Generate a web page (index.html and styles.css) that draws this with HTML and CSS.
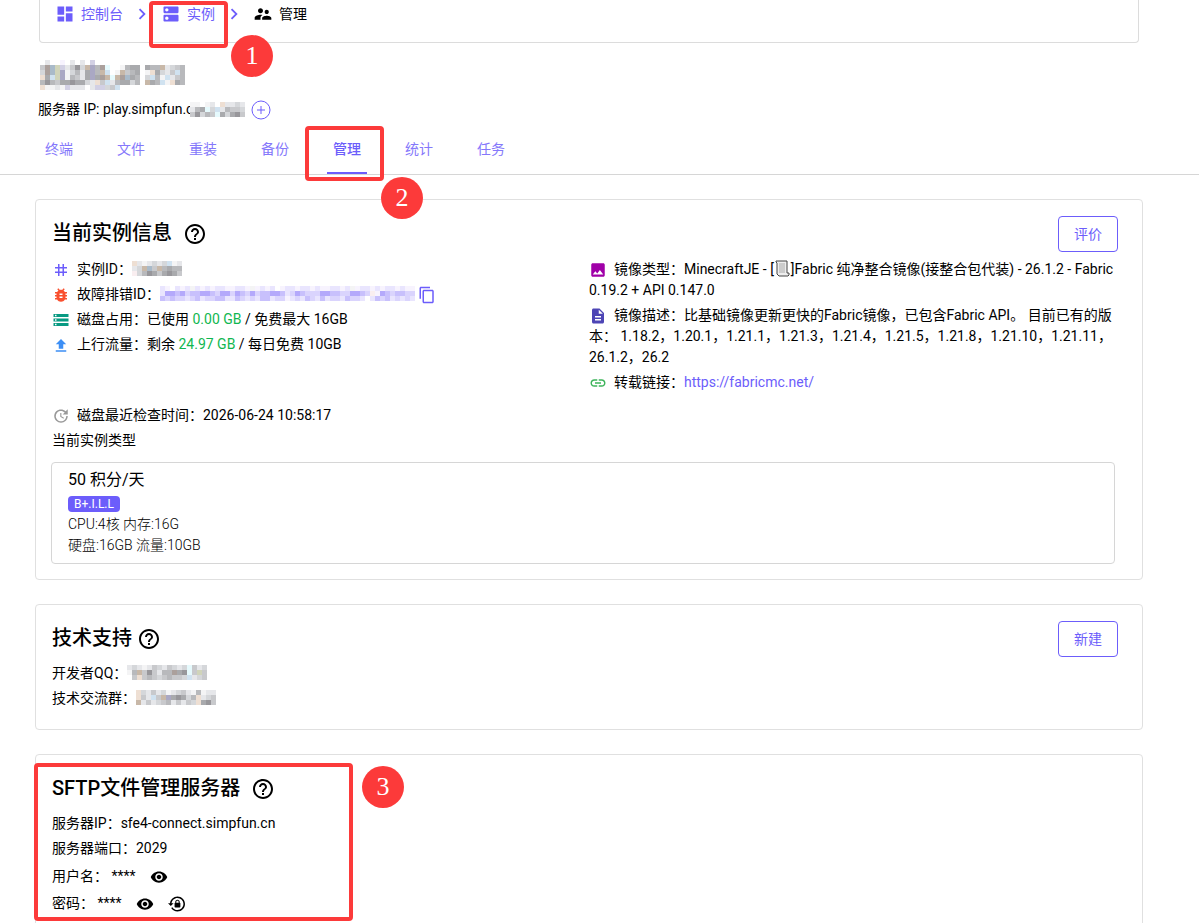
FILE: index.html
```html
<!DOCTYPE html>
<html lang="zh-CN">
  <head>
    <meta charset="UTF-8" />
    <meta name="viewport" content="width=device-width, initial-scale=1.0" />
    <title>实例管理</title>
    <link rel="stylesheet" href="styles.css">
  </head>
  <body>
    <svg class="sprite" aria-hidden="true">
      <symbol id="i-help" viewBox="0 0 24 24"><path d="M11 18h2v-2h-2v2zm1-16C6.48 2 2 6.48 2 12s4.48 10 10 10 10-4.48 10-10S17.52 2 12 2zm0 18c-4.41 0-8-3.59-8-8s3.59-8 8-8 8 3.59 8 8-3.59 8-8 8zm0-14c-2.21 0-4 1.79-4 4h2c0-1.1.9-2 2-2s2 .9 2 2c0 2-3 1.75-3 5h2c0-2.25 3-2.5 3-5 0-2.21-1.79-4-4-4z"/></symbol>
      <symbol id="i-chevron" viewBox="0 0 24 24"><path d="M8.59 16.58 13.17 12 8.59 7.41 10 6l6 6-6 6z"/></symbol>
      <symbol id="i-eye" viewBox="0 0 24 24"><path d="M12 4.5C7 4.5 2.73 7.61 1 12c1.73 4.39 6 7.5 11 7.5s9.27-3.11 11-7.5c-1.73-4.39-6-7.5-11-7.5zM12 17c-2.76 0-5-2.24-5-5s2.24-5 5-5 5 2.24 5 5-2.24 5-5 5zm0-8c-1.66 0-3 1.34-3 3s1.34 3 3 3 3-1.34 3-3-1.34-3-3-3z"/></symbol>
    </svg>

    <div class="page">
      <nav class="breadcrumb">
        <a href="#" class="crumb">
          <svg class="icon-md" viewBox="0 0 24 24"><path d="M3 13h8V3H3v10zm0 8h8v-6H3v6zm10 0h8V11h-8v10zm0-18v6h8V3h-8z"/></svg>
          控制台
        </a>
        <svg class="chevron"><use href="#i-chevron"/></svg>
        <a href="#" class="crumb">
          <svg class="icon-md" viewBox="0 0 24 24"><path d="M20 13H4c-.55 0-1 .45-1 1v6c0 .55.45 1 1 1h16c.55 0 1-.45 1-1v-6c0-.55-.45-1-1-1zM7 19c-1.1 0-2-.9-2-2s.9-2 2-2 2 .9 2 2-.9 2-2 2zM20 3H4c-.55 0-1 .45-1 1v6c0 .55.45 1 1 1h16c.55 0 1-.45 1-1V4c0-.55-.45-1-1-1zM7 9c-1.1 0-2-.9-2-2s.9-2 2-2 2 .9 2 2-.9 2-2 2z"/></svg>
          实例
          <span class="frame frame-crumb"></span>
          <span class="step step-crumb">1</span>
        </a>
        <svg class="chevron"><use href="#i-chevron"/></svg>
        <span class="crumb current">
          <svg class="icon-md" viewBox="0 0 24 24"><path d="M16.5 12c1.38 0 2.49-1.12 2.49-2.5S17.88 7 16.5 7 14 8.12 14 9.5s1.12 2.5 2.5 2.5zM9 11c1.66 0 2.99-1.34 2.99-3S10.66 5 9 5 6 6.34 6 8s1.34 3 3 3zm7.5 3c-1.83 0-5.5.92-5.5 2.75V19h11v-2.25c0-1.83-3.67-2.75-5.5-2.75zM9 13c-2.33 0-7 1.17-7 3.5V19h7v-2.25c0-.85.33-2.34 2.37-3.47C10.5 13.1 9.66 13 9 13z"/></svg>
          管理
        </span>
      </nav>

      <header class="server">
        <svg class="mosaic" data-mosaic="title"></svg>
        <div class="server-ip">
          <span>服务器 IP: play.simpfun.c</span>
          <svg class="mosaic" data-mosaic="host"></svg>
          <button class="round-btn" aria-label="添加">
            <svg viewBox="0 0 20 20"><circle cx="10" cy="10" r="9"/><path d="M10 6v8M6 10h8"/></svg>
          </button>
        </div>
      </header>

      <nav class="tabs">
        <a href="#" class="tab">终端</a>
        <a href="#" class="tab">文件</a>
        <a href="#" class="tab">重装</a>
        <a href="#" class="tab">备份</a>
        <a href="#" class="tab active">管理<span class="frame frame-tab"></span><span class="step step-tab">2</span></a>
        <a href="#" class="tab">统计</a>
        <a href="#" class="tab">任务</a>
      </nav>

      <main class="cards">
        <section class="card">
          <div class="card-header">
            <h2>当前实例信息</h2>
            <svg class="help wide"><use href="#i-help"/></svg>
            <button class="outlined">评价</button>
          </div>
          <div class="columns">
            <div class="column">
              <p class="row">
                <svg class="icon c-primary" viewBox="0 0 24 24"><path d="M20 10V8h-4V4h-2v4h-4V4H8v4H4v2h4v4H4v2h4v4h2v-4h4v4h2v-4h4v-2h-4v-4h4zm-6 4h-4v-4h4v4z"/></svg>实例ID：<svg class="mosaic" data-mosaic="id"></svg>
              </p>
              <p class="row">
                <svg class="icon c-bug" viewBox="0 0 24 24"><path d="M20 8h-2.81c-.45-.78-1.07-1.45-1.82-1.96L17 4.41 15.59 3l-2.17 2.17C12.96 5.06 12.49 5 12 5s-.96.06-1.41.17L8.41 3 7 4.41l1.62 1.63C7.88 6.55 7.26 7.22 6.81 8H4v2h2.09c-.05.33-.09.66-.09 1v1H4v2h2v1c0 .34.04.67.09 1H4v2h2.81c1.04 1.79 2.97 3 5.19 3s4.15-1.21 5.19-3H20v-2h-2.09c.05-.33.09-.66.09-1v-1h2v-2h-2v-1c0-.34-.04-.67-.09-1H20V8zm-6 8h-4v-2h4v2zm0-4h-4v-2h4v2z"/></svg>故障排错ID：<svg class="mosaic" data-mosaic="debug"></svg>
                <button class="copy" aria-label="复制">
                  <svg viewBox="0 0 24 24"><path d="M16 1H4c-1.1 0-2 .9-2 2v14h2V3h12V1zm3 4H8c-1.1 0-2 .9-2 2v14c0 1.1.9 2 2 2h11c1.1 0 2-.9 2-2V7c0-1.1-.9-2-2-2zm0 16H8V7h11v14z"/></svg>
                </button>
              </p>
              <p class="row">
                <svg class="icon c-disk" viewBox="0 0 24 24"><path d="M2 20h20v-4H2v4zm2-3h2v2H4v-2zM2 4v4h20V4H2zm4 3H4V5h2v2zm-4 7h20v-4H2v4zm2-3h2v2H4v-2z"/></svg>磁盘占用：已使用 <span class="c-ok">0.00 GB</span> / 免费最大 16GB
              </p>
              <p class="row">
                <svg class="icon c-upload" viewBox="0 0 24 24"><path d="M9 17h6v-6h4l-7-7-7 7h4zM5 19h14v2H5z"/></svg>上行流量：剩余 <span class="c-ok">24.97 GB</span> / 每日免费 10GB
              </p>
            </div>
            <div class="column">
              <p class="row">
                <svg class="icon c-image" viewBox="0 0 24 24"><path d="M21 19V5c0-1.1-.9-2-2-2H5c-1.1 0-2 .9-2 2v14c0 1.1.9 2 2 2h14c1.1 0 2-.9 2-2zM8.5 13.5l2.5 3.01L14.5 12l4.5 6H5l3.5-4.5z"/></svg>镜像类型：MinecraftJE - [<svg class="page-glyph" viewBox="0 0 17 17"><path class="paper" d="M2 1h11v12h2v2l-1 1H5l-2-2V3L2 2z"/><path class="lines" d="M5 4h6M5 6h6M5 8h6M5 10h6M5 12h6"/></svg>]Fabric 纯净整合镜像(接整合包代装) - 26.1.2 - Fabric 0.19.2 + API 0.147.0
              </p>
              <p class="row">
                <svg class="icon c-doc" viewBox="0 0 24 24"><path d="M14 2H6c-1.1 0-2 .9-2 2v16c0 1.1.9 2 2 2h12c1.1 0 2-.9 2-2V8l-6-6zm2 16H8v-2h8v2zm0-4H8v-2h8v2zm-3-5V3.5L18.5 9H13z"/></svg>镜像描述：比基础镜像更新更快的Fabric镜像，已包含Fabric API。 目前已有的版本： 1.18.2，1.20.1，1.21.1，1.21.3，1.21.4，1.21.5，1.21.8，1.21.10，1.21.11，26.1.2，26.2
              </p>
              <p class="row">
                <svg class="icon c-link" viewBox="0 0 24 24"><path d="M3.9 12c0-1.71 1.39-3.1 3.1-3.1h4V7H7c-2.76 0-5 2.24-5 5s2.24 5 5 5h4v-1.9H7c-1.71 0-3.1-1.39-3.1-3.1zM8 13h8v-2H8v2zm9-6h-4v1.9h4c1.71 0 3.1 1.39 3.1 3.1s-1.39 3.1-3.1 3.1h-4V17h4c2.76 0 5-2.24 5-5s-2.24-5-5-5z"/></svg>转载链接：<a href="https://fabricmc.net/">https://fabricmc.net/</a>
              </p>
            </div>
          </div>
          <p class="row">
            <svg class="icon c-grey" viewBox="0 0 24 24"><path d="M21 10.12h-6.78l2.74-2.82c-2.73-2.7-7.15-2.8-9.88-.1-2.73 2.71-2.73 7.08 0 9.79s7.15 2.71 9.88 0C18.32 15.65 19 14.08 19 12.1h2c0 1.98-.88 4.55-2.64 6.29-3.51 3.48-9.21 3.48-12.72 0-3.5-3.47-3.53-9.11-.02-12.58s9.14-3.47 12.65 0L21 3v7.12zM12.5 8v4.25l3.5 2.08-.72 1.21L11 13V8h1.5z"/></svg>磁盘最近检查时间：2026-06-24 10:58:17
          </p>
          <p class="row">当前实例类型</p>
          <div class="plan">
            <h3>50 积分/天</h3>
            <span class="chip">B+.I.L.L</span>
            <p>CPU:4核 内存:16G</p>
            <p>硬盘:16GB 流量:10GB</p>
          </div>
        </section>

        <section class="card">
          <div class="card-header">
            <h2>技术支持</h2>
            <svg class="help"><use href="#i-help"/></svg>
            <button class="outlined">新建</button>
          </div>
          <p class="row">开发者QQ：<svg class="mosaic" data-mosaic="qq"></svg></p>
          <p class="row">技术交流群：<svg class="mosaic" data-mosaic="group"></svg></p>
        </section>

        <section class="card sftp">
          <span class="frame frame-sftp"></span>
          <span class="step step-sftp">3</span>
          <div class="card-header">
            <h2>SFTP文件管理服务器</h2>
            <svg class="help wide"><use href="#i-help"/></svg>
          </div>
          <p class="row">服务器IP：sfe4-connect.simpfun.cn</p>
          <p class="row">服务器端口：2029</p>
          <div class="secret">
            <span>用户名： ****</span>
            <button class="icon-btn" aria-label="显示用户名"><svg><use href="#i-eye"/></svg></button>
          </div>
          <div class="secret">
            <span>密码： ****</span>
            <button class="icon-btn" aria-label="显示密码"><svg><use href="#i-eye"/></svg></button>
            <button class="icon-btn" aria-label="重置密码">
              <svg viewBox="0 0 24 24"><path d="M12.63 2c5.53 0 10.01 4.5 10.01 10s-4.48 10-10.01 10c-3.51 0-6.58-1.82-8.37-4.57l1.58-1.25C7.25 18.47 9.76 20 12.64 20a8 8 0 0 0 8-8 8 8 0 0 0-8-8C8.56 4 5.2 7.06 4.71 11h2.76l-3.74 3.73L0 11h2.69c.5-5.05 4.76-9 9.94-9m2.96 8.24c.5.01.91.41.91.92v4.61c0 .5-.41.92-.92.92H9.69c-.51 0-.92-.42-.92-.92v-4.61c0-.51.41-.91.91-.92V9.23c0-1.63 1.33-2.95 2.96-2.95 1.62 0 2.95 1.32 2.95 2.95v1.01m-2.95-2.59c-.87 0-1.58.71-1.58 1.58v1.01h3.16V9.23c0-.87-.71-1.58-1.58-1.58z"/></svg>
            </button>
          </div>
        </section>
      </main>
    </div>

    <script src="mosaic.js"></script>
  </body>
</html>
```
FILE: styles.css
```css
* {
  box-sizing: border-box;
}
body {
  margin: 0;
  background: #fff;
  color: #000;
  font-family: Roboto, 'Noto Sans CJK SC', sans-serif;
  font-size: 14px;
  line-height: 21px;
}
h2,
h3,
p {
  margin: 0;
}
a {
  color: #6c5dfb;
  text-decoration: none;
}
button {
  font-family: inherit;
  font-size: 14px;
  cursor: pointer;
  background: none;
}
svg {
  fill: currentColor;
}
.sprite {
  display: none;
}
.page {
  height: 100vh;
  overflow: hidden;
}

/* breadcrumb */
.breadcrumb {
  display: flex;
  align-items: center;
  margin: 0 60px 0 39px;
  padding: 3px 15px 17px;
  border: 1px solid #dcdcdc;
  border-top: 0;
  border-radius: 0 0 4px 4px;
}
.crumb {
  position: relative;
  display: flex;
  align-items: center;
  gap: 6px;
  height: 20px;
}
.current {
  color: #000;
}
.icon-md {
  width: 20px;
  height: 20px;
}
.chevron {
  width: 22px;
  height: 22px;
  margin: 0 8px;
  color: #6c5dfb;
}

/* server name and address */
.server {
  padding: 17px 38px 6px;
}
.server > .mosaic {
  display: block;
  margin-left: 2px;
}
.server-ip {
  display: flex;
  align-items: center;
  height: 21px;
  margin-top: 9px;
}
.server-ip .mosaic {
  margin-left: -3px;
}
.round-btn {
  width: 20px;
  height: 20px;
  margin-left: 6px;
  padding: 0;
  border: 0;
  color: #6c5dfb;
}
.round-btn svg {
  display: block;
  fill: none;
  stroke: currentColor;
}
.mosaic {
  vertical-align: middle;
  shape-rendering: crispEdges;
}

/* tabs */
.tabs {
  display: flex;
  padding: 0 23px;
  border-bottom: 1px solid #d6d6d6;
}
.tab {
  position: relative;
  width: 72px;
  height: 48px;
  line-height: 46px;
  text-align: center;
  color: #8578fb;
}
.tab.active {
  color: #6c5dfb;
  font-weight: 500;
}
.tab.active::after {
  content: '';
  position: absolute;
  left: 16px;
  right: 16px;
  bottom: 0;
  height: 2px;
  background: #6c5dfb;
}

/* cards */
.cards {
  display: flex;
  flex-direction: column;
  gap: 24px;
  padding: 24px 56px 24px 35px;
}
.card {
  position: relative;
  padding: 16px;
  border: 1px solid #e0e0e0;
  border-radius: 4px;
}
.card-header {
  display: flex;
  align-items: flex-start;
  height: 36px;
  margin-bottom: 6px;
  padding-right: 8px;
}
.card-header h2 {
  font-size: 20px;
  line-height: 34px;
  font-weight: 500;
}
.help {
  width: 24px;
  height: 24px;
  margin: 6px 0 0 5px;
}
.help.wide {
  margin-left: 11px;
}
.outlined {
  width: 60px;
  height: 36px;
  margin-left: auto;
  padding: 0 0 2px;
  border: 1px solid #6c5dfb;
  border-radius: 4px;
  color: #6c5dfb;
}
.columns {
  display: grid;
  grid-template-columns: 1fr 1fr;
  padding-top: 1px;
  margin-bottom: 8px;
}
.column {
  padding-right: 12px;
}
.row {
  margin-bottom: 4px;
}
.icon {
  width: 18px;
  height: 18px;
  margin-right: 7px;
  vertical-align: -5px;
}
.row .mosaic {
  vertical-align: -2px;
}
.copy {
  height: 18px;
  padding: 0;
  border: 0;
  color: #6c5dfb;
  vertical-align: -5px;
}
.copy svg {
  display: block;
  width: 18px;
  height: 18px;
}
.page-glyph {
  width: 17px;
  height: 17px;
  vertical-align: -3px;
}
.page-glyph .paper {
  fill: #eee;
  stroke: #444;
}
.page-glyph .lines {
  stroke: #aaa;
}
.c-primary {
  color: #6c5dfb;
}
.c-bug {
  color: #f9502f;
}
.c-disk {
  color: #089a82;
}
.c-upload {
  color: #3d8ff5;
}
.c-ok {
  color: #10b750;
}
.c-image {
  color: #a000a8;
}
.c-doc {
  color: #4d45b5;
}
.c-link {
  color: #3eb45b;
}
.c-grey {
  color: #999;
}

/* current plan */
.plan {
  margin: 11px 11px -1px -1px;
  padding: 5px 16px 7px;
  border: 1px solid #d6d6d6;
  border-radius: 4px;
  font-weight: 300;
}
.plan h3 {
  font-size: 16px;
  line-height: 24px;
  font-weight: 400;
}
.chip {
  display: block;
  width: fit-content;
  margin: 4px 0 2px;
  padding: 0 6px;
  border-radius: 4px;
  background: #6c5dfb;
  color: #fff;
  font-size: 12px;
  line-height: 16px;
  font-weight: 400;
}

/* sftp */
.secret {
  display: flex;
  align-items: center;
  height: 27px;
}
.secret span {
  margin-right: 7px;
}
.icon-btn {
  display: flex;
  padding: 0 7px;
  border: 0;
  color: #000;
}
.icon-btn svg {
  width: 18px;
  height: 18px;
}

/* guide marks */
.frame {
  position: absolute;
  border: 4px solid #fc3a3a;
  border-radius: 4px;
  pointer-events: none;
}
.step {
  position: absolute;
  z-index: 1;
  width: 42px;
  height: 42px;
  border-radius: 50%;
  background: #fc3a3a;
  color: #fff;
  font: 26px/42px 'Liberation Serif', serif;
  text-align: center;
}
.frame-crumb {
  left: -12px;
  top: -3px;
  width: 79px;
  height: 47px;
}
.step-crumb {
  left: 70px;
  top: 31px;
}
.frame-tab {
  left: -6px;
  top: 0;
  width: 79px;
  height: 55px;
}
.step-tab {
  left: 70px;
  top: 51px;
}
.frame-sftp {
  left: -2px;
  top: 8px;
  width: 319px;
  height: 158px;
}
.step-sftp {
  left: 326px;
  top: 11px;
}
```
FILE: mosaic.js
```js
// masked values, one letter per 5px block, '.' is empty
const palette = {
  a: '#f4f4f5', b: '#e6e7ea', c: '#d5d7da', d: '#c8c9cc', e: '#b8b9bc',
  f: '#a9aaad', g: '#98979b', h: '#eedfd3', i: '#c8b8a8', j: '#aba09c',
  k: '#d0e2f0', l: '#a9bac9', m: '#e6fafd', n: '#d2d0e4', o: '#aaa8c4',
  p: '#d0d4ba', q: '#f7f3fe', r: '#e9e5fe', s: '#dad4fd', t: '#c8c0fc',
  u: '#b4a9fb', v: '#f9eef0',
};

const masks = {
  title: [
    '.b..q.b.b.n..................',
    'djlpnbdgcioejm..aeff.feeibcde',
    'cjlpoacebfoeik.aidef.ahfcbdke',
    'hfkpoaedbfofjimijlfe.ckeakbde',
    'egedffgffcbhdkbeffce.ifekahfe',
    'haabanbbb.bnncdk.............',
  ],
  host: [
    'aa.ab.hbbcb',
    'befmckbeddc',
    'dgcedmfcfgd',
  ],
  id: ['hbabcbckab', 'bcildiefee', 'vcegfdfgfd'],
  debug: [
    'rq.rqrarqrqrrqqrrqaqrqr.qrrqrrqrqqrrqraqrrqrqrrqrqq',
    'ruutusttuutsuusutsusttuutrsutsssuuttssuutsvqutsttss',
    'tstssrstrssttrrtsrsrttrssqrsrtsrtrssrtssr.rtstrsrsr',
  ],
  qq: [
    'bcbabdcbdcbcmdbc',
    'aeidgdbeejfgmdpd',
    '.dhdedcdeddckbcd',
  ],
  group: [
    'hcbdbcabcdbaeabb',
    'hdbkdiofgfcehbcd',
    'ibdbcdebdbdchfgd',
  ],
};

document.querySelectorAll('[data-mosaic]').forEach((svg) => {
  const rows = masks[svg.dataset.mosaic];
  svg.setAttribute('width', rows[0].length * 5);
  svg.setAttribute('height', rows.length * 5);
  rows.forEach((row, y) => {
    [...row].forEach((key, x) => {
      if (!palette[key]) return;
      const rect = document.createElementNS('http://www.w3.org/2000/svg', 'rect');
      rect.setAttribute('x', x * 5);
      rect.setAttribute('y', y * 5);
      rect.setAttribute('width', 5);
      rect.setAttribute('height', 5);
      rect.setAttribute('fill', palette[key]);
      svg.appendChild(rect);
    });
  });
});
```
